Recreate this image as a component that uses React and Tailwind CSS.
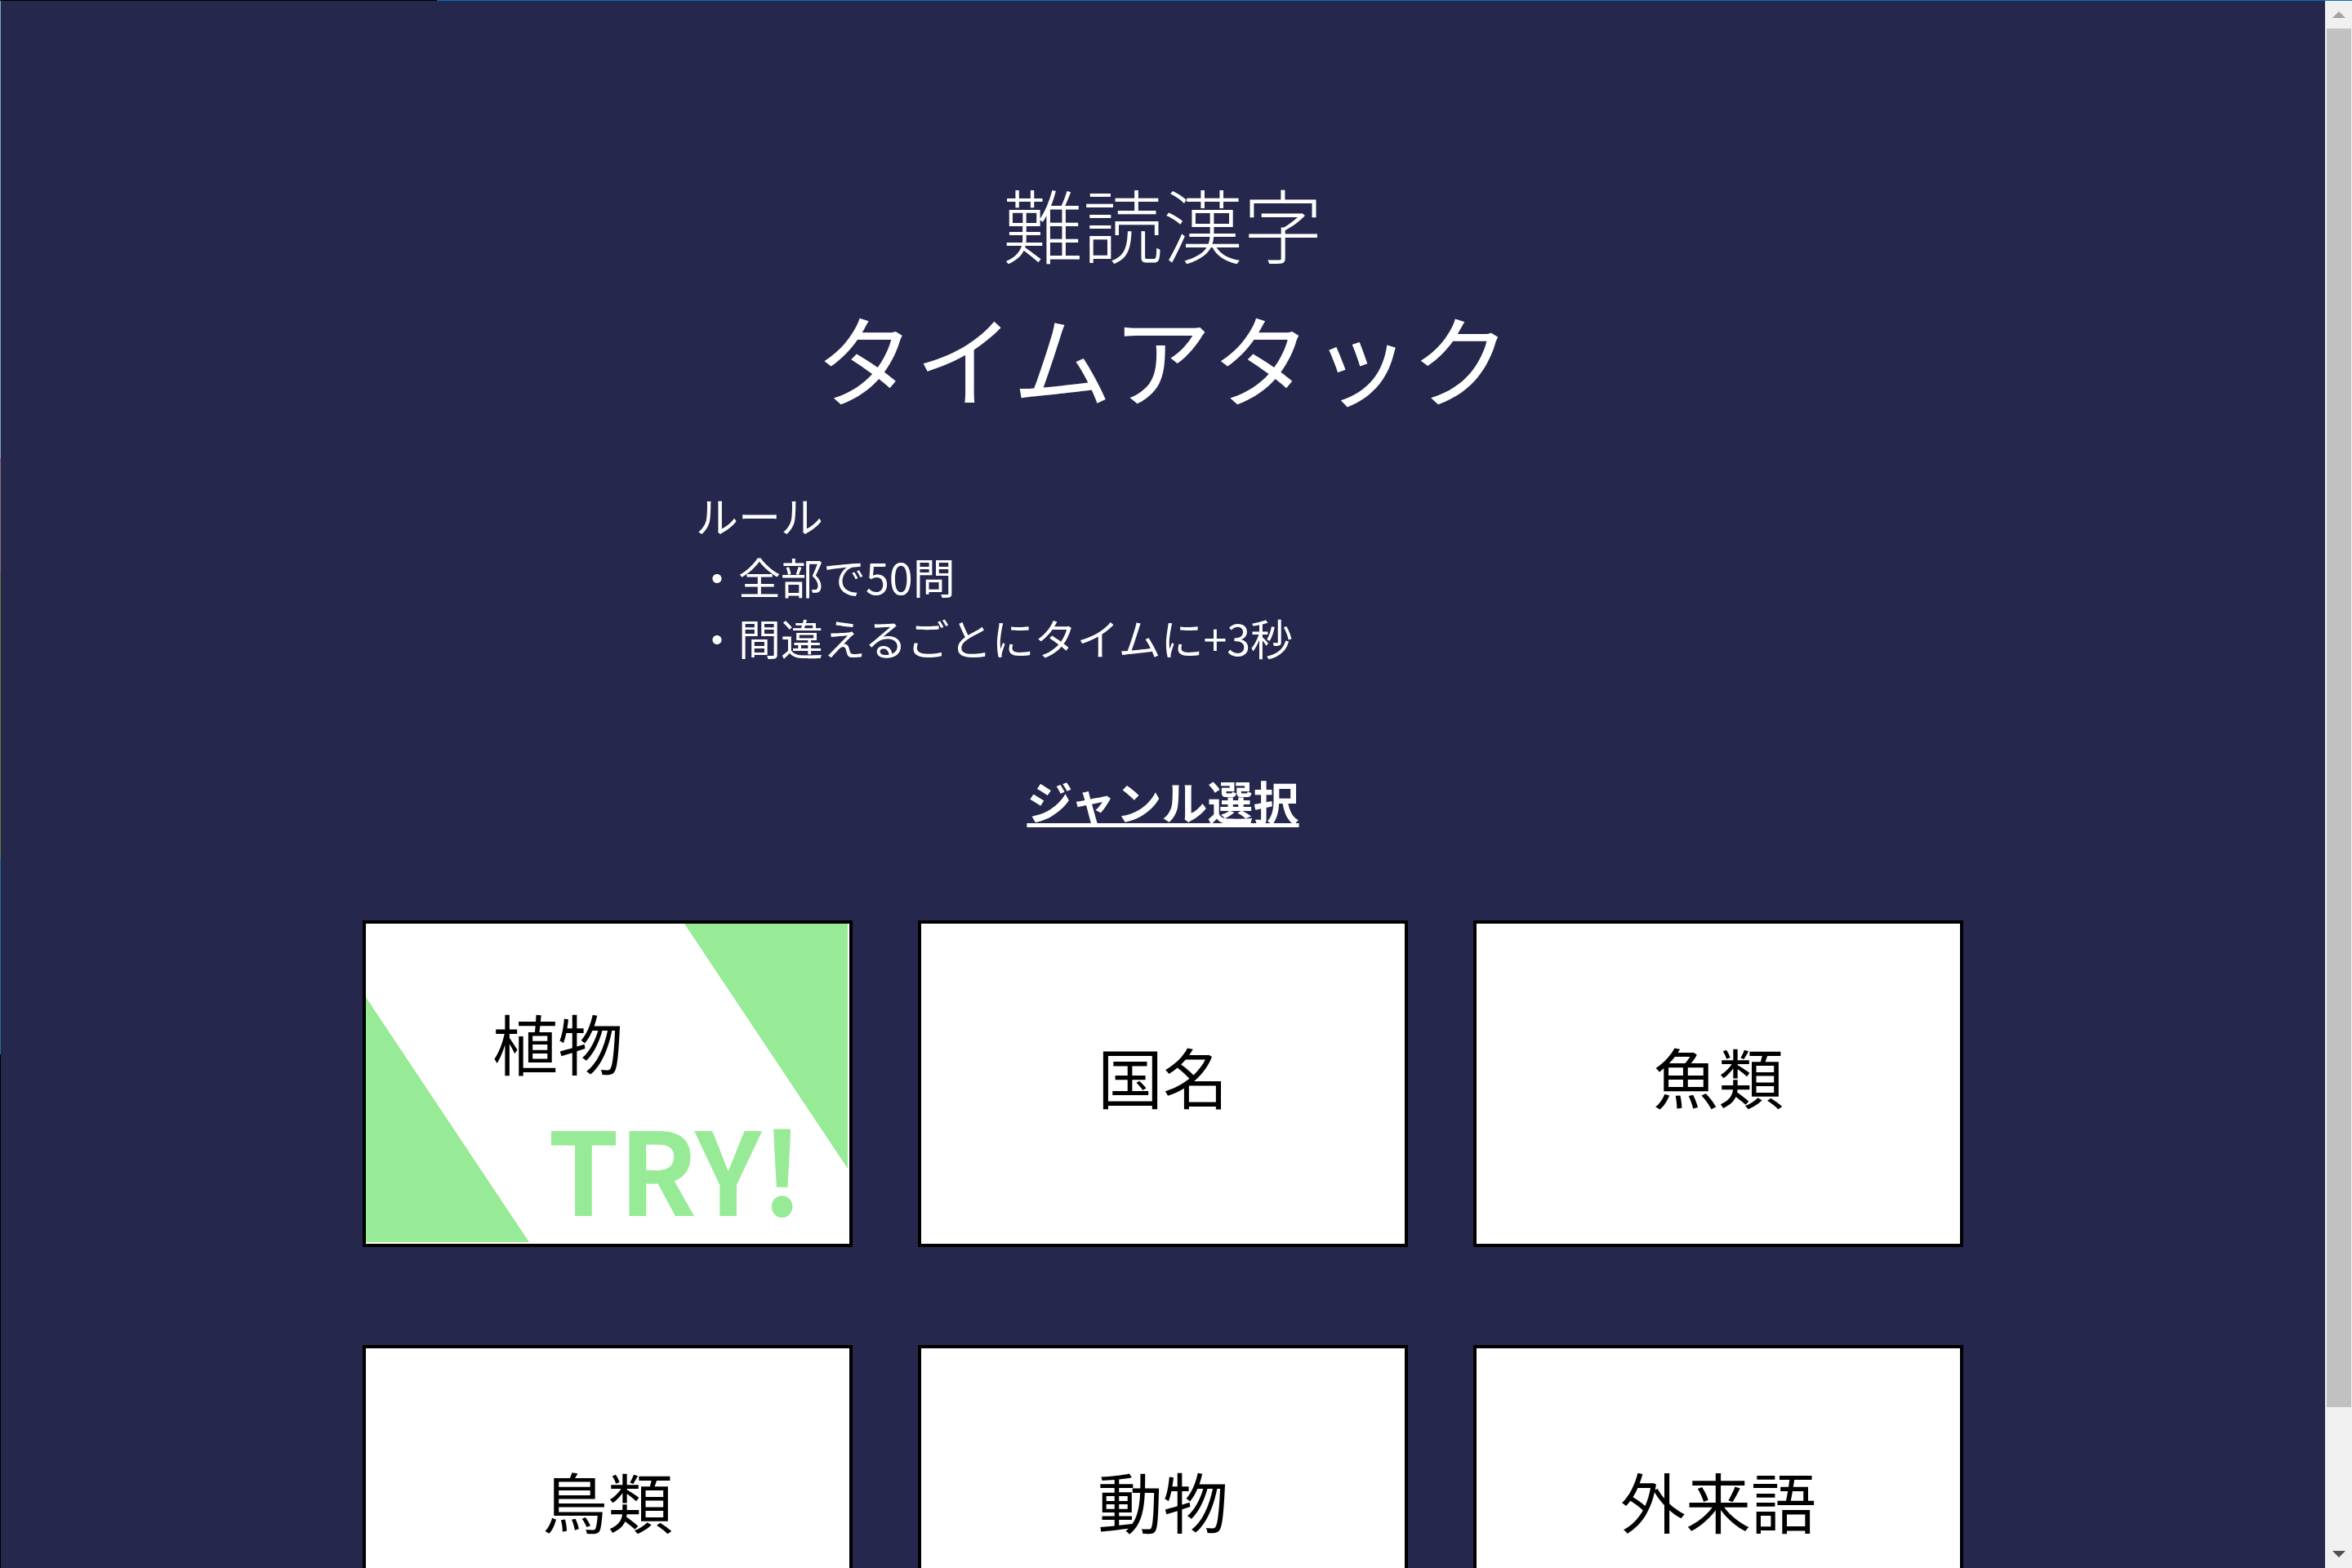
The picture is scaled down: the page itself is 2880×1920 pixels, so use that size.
import React from 'react';

const genres = ['植物', '国名', '魚類', '鳥類', '動物', '外来語'];

const GenreCard = ({ name, active }) => {
  if (!active) {
    return (
      <div className="h-[400px] border-4 border-black bg-white flex items-center justify-center pb-[22px] text-[80px] leading-none text-black">
        {name}
      </div>
    );
  }
  return (
    <div className="relative h-[400px] border-4 border-black bg-white flex items-center justify-center pr-[122px] pb-[104px] text-[80px] leading-none text-black">
      <svg className="absolute inset-0 w-full h-full" viewBox="0 0 592 392" preserveAspectRatio="none">
        <polygon points="390,0 590,0 590,300" fill="#98eb96" />
        <polygon points="0,90 0,390 200,390" fill="#98eb96" />
      </svg>
      <span className="relative">{name}</span>
      <span className="absolute right-[57px] bottom-[18px] text-[140px] font-bold leading-[1.1] tracking-[-0.5px] text-[#98eb96]">TRY!</span>
    </div>
  );
};

export default function App() {
  return (
    <div className="flex flex-col w-[2880px] h-[1920px] overflow-hidden bg-[#25274d] font-['Noto_Sans_CJK_JP',sans-serif]">
      <div className="flex h-px shrink-0">
        <div className="w-[535px] bg-black" />
        <div className="flex-1 bg-[#0a6fb5]" />
      </div>
      <div className="flex flex-1 min-h-0">
        <div className="flex flex-col w-px shrink-0">
          <div className="h-[560px] bg-[#7fa6c0]" />
          <div className="h-[140px] bg-[#8a6f6a]" />
          <div className="h-[350px] bg-[#5f7a3a]" />
          <div className="h-[240px] bg-[#1f6f8f]" />
          <div className="flex-1 bg-black" />
        </div>

        <main className="flex-1 flex flex-col items-center text-white">
          <h1 className="mt-[222px] text-[98px] font-light leading-none">難読漢字</h1>
          <h2 className="mt-[54px] text-[122px] leading-none">タイムアタック</h2>

          <div className="mt-[96px] w-[1144px] text-[52px] leading-[75px]">
            <p>ルール</p>
            <p>・全部で50問</p>
            <p>・間違えるごとにタイムに+3秒</p>
          </div>

          <h3 className="mt-[134px] text-[56px] font-bold leading-none underline decoration-[5px] underline-offset-[4px]">
            ジャンル選択
          </h3>

          <div className="mt-[119px] grid grid-cols-[repeat(3,600px)] gap-x-[80px] gap-y-[120px]">
            {genres.map((g, i) => (
              <GenreCard key={g} name={g} active={i === 0} />
            ))}
          </div>
        </main>

        <div className="flex flex-col w-[33px] shrink-0 bg-[#f0f0f0]">
          <div className="h-[34px] flex items-center justify-center">
            <svg width="16" height="8" viewBox="0 0 16 8">
              <polygon points="8,0 16,8 0,8" fill="#a3a3a3" />
            </svg>
          </div>
          <div className="h-[1688px] ml-[2px] mr-px bg-[#c1c1c1]" />
          <div className="flex-1" />
          <div className="h-[34px] flex items-center justify-center">
            <svg width="16" height="8" viewBox="0 0 16 8">
              <polygon points="0,0 16,0 8,8" fill="#505050" />
            </svg>
          </div>
        </div>
      </div>
    </div>
  );
}
